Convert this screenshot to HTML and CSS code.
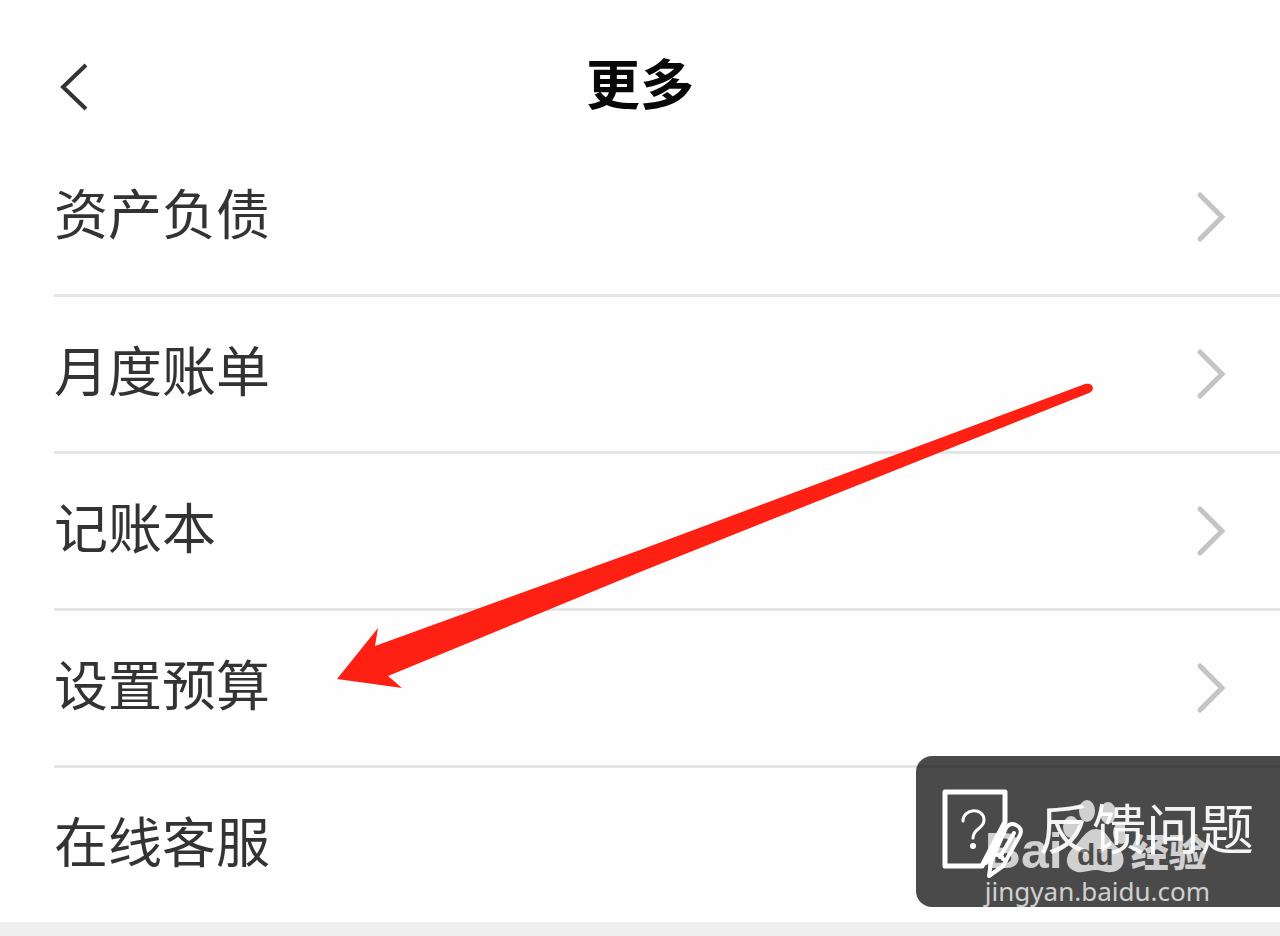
FILE: index.html
```
<!DOCTYPE html>
<html lang="zh-CN">
<head>
    <meta charset="UTF-8">
    <meta name="viewport" content="width=device-width, initial-scale=1.0">
    <title>更多</title>
    <link rel="stylesheet" href="styles.css">
</head>
<body>

    <!-- Header -->
    <header class="header">
        <button class="back" type="button" aria-label="返回">
            <svg width="36" height="52" viewBox="0 0 36 52"><path d="M32 5 9 27 32 49"/></svg>
        </button>
        <h1>更多</h1>
    </header>

    <!-- Menu -->
    <main>
        <ul class="menu">
            <li><a href="#assets"><span>资产负债</span><svg class="chevron" width="32" height="54" viewBox="0 0 32 54"><path d="M5 5 27 27 5 49"/></svg></a></li>
            <li><a href="#bill"><span>月度账单</span><svg class="chevron" width="32" height="54" viewBox="0 0 32 54"><path d="M5 5 27 27 5 49"/></svg></a></li>
            <li><a href="#book"><span>记账本</span><svg class="chevron" width="32" height="54" viewBox="0 0 32 54"><path d="M5 5 27 27 5 49"/></svg></a></li>
            <li><a href="#budget"><span>设置预算</span><svg class="chevron" width="32" height="54" viewBox="0 0 32 54"><path d="M5 5 27 27 5 49"/></svg></a></li>
            <li><a href="#service"><span>在线客服</span></a></li>
        </ul>
    </main>

    <!-- Arrow to the budget entry -->
    <svg class="arrow" width="760" height="310" viewBox="0 0 760 310">
        <path d="M1 299 42 248 39 266 304 170 749 4C757 2 760 10 753 13L304 192 52 296 66 308Z"/>
    </svg>

    <!-- Feedback button -->
    <button class="feedback" type="button">
        <svg width="86" height="92" viewBox="0 0 86 92">
            <path d="M42 80H5V6H65V36L42 80" stroke-width="5"/>
            <path d="M23 35C23 22 44 21 44 34C44 43 33 42 33 52" stroke-width="3"/>
            <circle cx="33" cy="60" r="3" class="dot"/>
            <path d="M66 42Q70 36 76 39Q83 42 80 49L63 80 49 90 51 76ZM59 53 46 77M74 47 60 71M63 73Q61 68 54 69" stroke-width="4"/>
        </svg>
        <span>反馈问题</span>
    </button>

    <!-- Watermark -->
    <div class="watermark">
        <div class="brand">
            <span class="bai">Bai</span>
            <svg width="62" height="76" viewBox="0 0 62 76">
                <ellipse cx="8" cy="29" rx="8" ry="11"/>
                <ellipse cx="24" cy="13" rx="8" ry="11"/>
                <ellipse cx="45" cy="15" rx="8" ry="11"/>
                <ellipse cx="58" cy="35" rx="8" ry="11"/>
                <path d="M33 31C43 31 46 42 54 49C64 57 63 73 48 74C42 75 38 72 33 72C28 72 21 75 14 74C2 71 1 59 9 51C17 45 22 31 33 31Z"/>
                <text x="14" y="67">du</text>
            </svg>
            <span class="jingyan">经验</span>
        </div>
        <span class="site">jingyan.baidu.com</span>
    </div>

</body>
</html>
```
FILE: styles.css
```
* {
    box-sizing: border-box;
}
body {
    position: relative;
    margin: 0;
    min-height: 100vh;
    overflow-x: hidden;
    background-color: #efefef;
    color: #333;
    font-family: "Noto Sans CJK SC", sans-serif;
}
button {
    border: 0;
    padding: 0;
    background: none;
    font: inherit;
    cursor: pointer;
}
svg {
    display: block;
    flex: none;
}
.header {
    display: grid;
    grid-template-columns: 1fr auto 1fr;
    align-items: center;
    height: 140px;
    padding: 32px 54px 0;
    background-color: #fefefe;
}
.header h1 {
    margin: 0;
    padding-bottom: 8px;
    color: #080808;
    font-size: 54px;
    font-weight: 700;
    line-height: 80px;
}
.back {
    justify-self: start;
}
.back path {
    fill: none;
    stroke: #333;
    stroke-width: 4;
}
.menu {
    margin: 0;
    padding: 0 0 0 54px;
    list-style: none;
    background-color: #fefefe;
}
.menu a {
    display: flex;
    align-items: center;
    justify-content: space-between;
    height: 154px;
    padding-right: 53px;
    color: #333;
    font-size: 54px;
    line-height: 80px;
    text-decoration: none;
}
.menu span,
.feedback span {
    padding-bottom: 10px;
}
.menu li + li {
    border-top: 3px solid #e5e5e5;
}
.chevron path {
    fill: none;
    stroke: #c4c4c4;
    stroke-width: 5;
    stroke-linecap: round;
}
.arrow {
    position: absolute;
    left: 336px;
    top: 380px;
    fill: #fe2013;
    pointer-events: none;
}
.feedback {
    position: absolute;
    right: 0;
    top: 756px;
    display: flex;
    align-items: center;
    gap: 12px;
    height: 151px;
    padding: 0 26px 0 24px;
    border-radius: 16px 0 0 16px;
    background-color: rgba(0, 0, 0, 0.71);
    color: #f4f4f4;
    font-size: 54px;
    line-height: 80px;
}
.feedback path {
    fill: none;
    stroke: #fff;
    stroke-linejoin: round;
    stroke-linecap: round;
}
.feedback .dot {
    fill: #fff;
}
.watermark {
    position: absolute;
    right: 70px;
    top: 798px;
    color: #fff;
    opacity: 0.74;
    pointer-events: none;
}
.brand {
    display: flex;
    align-items: flex-end;
    height: 76px;
}
.brand svg {
    fill: #fff;
    margin-right: 6px;
}
.brand text {
    fill: #4b4b4b;
    font-family: "Liberation Sans", sans-serif;
    font-size: 30px;
    font-weight: 700;
}
.bai {
    font-family: "Liberation Sans", sans-serif;
    font-size: 50px;
    font-weight: 700;
    line-height: 46px;
}
.jingyan {
    padding-bottom: 4px;
    font-size: 38px;
    font-weight: 900;
    line-height: 40px;
}
.site {
    display: block;
    font-family: "Noto Sans", sans-serif;
    font-size: 26px;
    line-height: 34px;
}
```
